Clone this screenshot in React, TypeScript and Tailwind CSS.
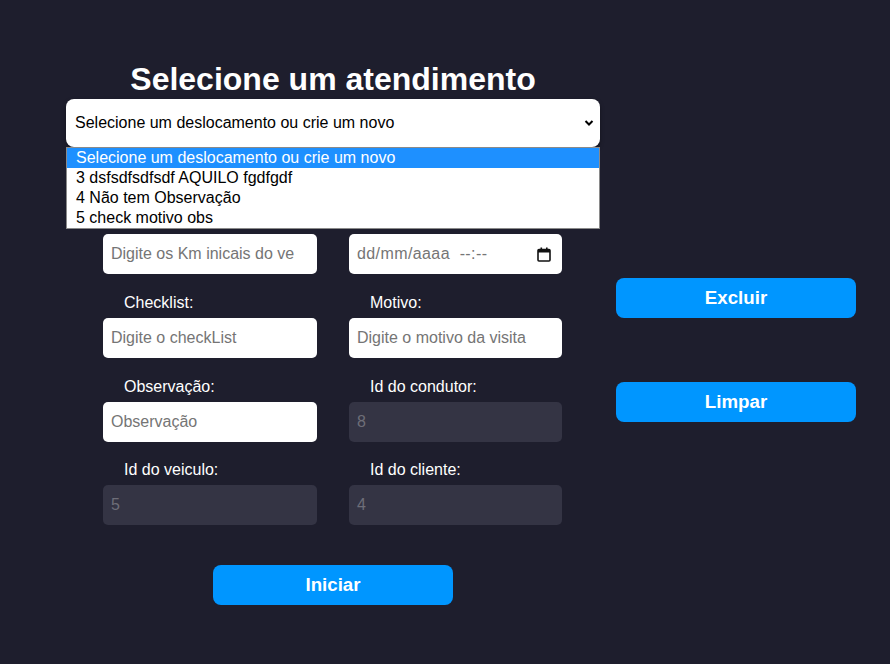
import React from "react";

function Field({
  label,
  placeholder,
  disabled,
  value,
  date,
  hideLabel,
}: {
  label: string;
  placeholder?: string;
  disabled?: boolean;
  value?: string;
  date?: boolean;
  hideLabel?: boolean;
}) {
  return (
    <div className="flex flex-col">
      <div
        className={
          hideLabel
            ? "invisible h-[18px] pl-[21px] text-[16px] leading-[18px] text-white"
            : "h-[18px] pl-[21px] text-[16px] leading-[18px] text-white"
        }
      >
        {label}
      </div>
      {date ? (
        <div className="mt-[6px] flex h-[40px] items-center justify-between rounded-[5px] bg-white pl-[8px] pr-[11px] text-[16px] text-[#757575]">
          <span className="tracking-[0.4px]">dd/mm/aaaa&nbsp;&nbsp;--:--</span>
          <svg width="14" height="15" viewBox="0 0 14 15">
            <rect x="1" y="2.5" width="12" height="11.5" fill="none" stroke="#111" strokeWidth="1.6" rx="1" />
            <rect x="1" y="2.5" width="12" height="3" fill="#111" />
            <rect x="3.5" y="0.5" width="1.6" height="3" fill="#111" />
            <rect x="9" y="0.5" width="1.6" height="3" fill="#111" />
          </svg>
        </div>
      ) : disabled ? (
        <div className="mt-[6px] flex h-[40px] items-center rounded-[5px] bg-[#343444] pl-[8px] text-[16px] text-[#6e6e78]">
          {value}
        </div>
      ) : (
        <div className="mt-[6px] flex h-[40px] items-center whitespace-nowrap rounded-[5px] bg-white pl-[8px] text-[16px] text-[#757575]">
          {placeholder}
        </div>
      )}
    </div>
  );
}

export default function App() {
  return (
    <div className="flex h-[664px] w-[890px] bg-[#1e1e2d] pl-[66px] font-['Liberation_Sans',Arial,sans-serif]">
      <div className="relative flex w-[534px] flex-col items-center">
        <h1 className="mt-[61px] text-[32px] font-bold leading-[37px] text-white">Selecione um atendimento</h1>
        <div className="mt-[1px] flex h-[48px] w-full items-center justify-between rounded-[8px] bg-white pl-[9px] pr-[6px] text-[16px] text-black shadow-[0_2px_4px_rgba(0,0,0,0.35)]">
          <span>Selecione um deslocamento ou crie um novo</span>
          <svg width="10" height="8" viewBox="0 0 10 8">
            <path d="M1.5 2 L5 5.5 L8.5 2" fill="none" stroke="#000" strokeWidth="2" />
          </svg>
        </div>
        <div className="ml-[37px] mt-[63px] grid grid-cols-[214px_213px] gap-x-[32px] gap-y-[20px] self-start">
          <Field label="Km inicial:" placeholder="Digite os Km inicais do ve" hideLabel />
          <Field label="Data e hora:" date hideLabel />
          <Field label="Checklist:" placeholder="Digite o checkList" />
          <Field label="Motivo:" placeholder="Digite o motivo da visita" />
          <Field label="Observação:" placeholder="Observação" />
          <Field label="Id do condutor:" disabled value="8" />
          <div className="-mt-[1px]">
            <Field label="Id do veiculo:" disabled value="5" />
          </div>
          <div className="-mt-[1px]">
            <Field label="Id do cliente:" disabled value="4" />
          </div>
        </div>
        <button className="mt-[40px] h-[40px] w-[240px] rounded-[8px] bg-[#0096ff] text-[18.7px] font-bold text-white">
          Iniciar
        </button>

        <div className="absolute left-0 top-[147px] w-full border border-[#8a8a8a] bg-white text-[16px] leading-[20px] text-black">
          <div className="h-[20px] bg-[#1e90ff] pl-[9px] text-white">Selecione um deslocamento ou crie um novo</div>
          <div className="h-[20px] pl-[9px]">3 dsfsdfsdfsdf AQUILO fgdfgdf</div>
          <div className="h-[20px] pl-[9px]">4 Não tem Observação</div>
          <div className="h-[20px] pl-[9px]">5 check motivo obs</div>
        </div>
      </div>
      <div className="ml-[16px] flex w-[240px] flex-col gap-[64px] pt-[278px]">
        <button className="h-[40px] w-[240px] rounded-[8px] bg-[#0096ff] text-[18.7px] font-bold text-white">Excluir</button>
        <button className="h-[40px] w-[240px] rounded-[8px] bg-[#0096ff] text-[18.7px] font-bold text-white">Limpar</button>
      </div>
    </div>
  );
}
